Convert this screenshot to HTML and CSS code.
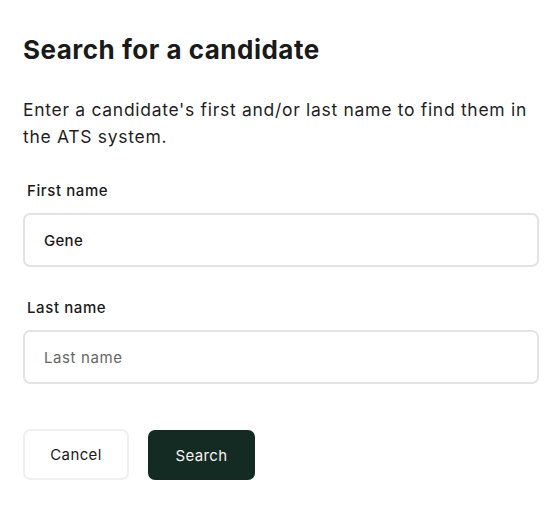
FILE: index.html
```html
<!DOCTYPE html>
<html>
<head>
<meta charset="utf-8">
<link rel="stylesheet" href="styles.css">
</head>
<body>
<div class="dialog">
  <h1 class="title">Search for a candidate</h1>
  <p class="desc">Enter a candidate's first and/or last name to find them in the ATS system.</p>
  <div class="field">
    <label class="label">First name</label>
    <div class="input filled">Gene</div>
  </div>
  <div class="field">
    <label class="label">Last name</label>
    <div class="input placeholder">Last name</div>
  </div>
  <div class="actions">
    <button class="btn btn-secondary">Cancel</button>
    <button class="btn btn-primary">Search</button>
  </div>
</div>
</body>
</html>
```
FILE: styles.css
```css
html, body {
  margin: 0;
  padding: 0;
  background: #ffffff;
}
body {
  font-family: Inter, "Open Sans", "Liberation Sans", sans-serif;
  color: #1c1c1c;
}
.dialog {
  padding: 30px 17px 0 23px;
  display: flex;
  flex-direction: column;
}
.title {
  margin: 0;
  font-size: 26px;
  font-weight: 700;
  line-height: 40px;
  letter-spacing: 0.5px;
  color: #1a1a1a;
}
.desc {
  margin: 27px 0 0 0;
  font-size: 17.5px;
  line-height: 26.5px;
  letter-spacing: 0.7px;
  color: #1f1f1f;
}
.field {
  display: flex;
  flex-direction: column;
  margin-top: 31px;
}
.field + .field {
  margin-top: 31px;
}
.label {
  font-size: 15px;
  font-weight: 500;
  line-height: 20px;
  padding-left: 4px;
  color: #1a1a1a;
  letter-spacing: 0.6px;
}
.input {
  margin-top: 12px;
  height: 50px;
  border: 2px solid #e3e3e3;
  border-radius: 7px;
  display: flex;
  align-items: center;
  padding-left: 19px;
  font-size: 15px;
  letter-spacing: 0.3px;
}
.filled {
  font-weight: 500;
  color: #1a1a1a;
}
.placeholder {
  color: #666666;
  letter-spacing: 0.6px;
}
.actions {
  display: flex;
  gap: 19px;
  margin-top: 45px;
}
.btn {
  font-family: inherit;
  font-size: 15px;
  letter-spacing: 0.4px;
  height: 51px;
  border-radius: 7px;
  padding: 0;
  cursor: pointer;
}
.btn-secondary {
  width: 106px;
  background: #ffffff;
  border: 2px solid #f0f0f0;
  color: #1a1a1a;
}
.btn-primary {
  width: 107px;
  height: 50px;
  margin-top: 1px;
  background: #142b23;
  border: none;
  color: #f4f4f4;
}
```
